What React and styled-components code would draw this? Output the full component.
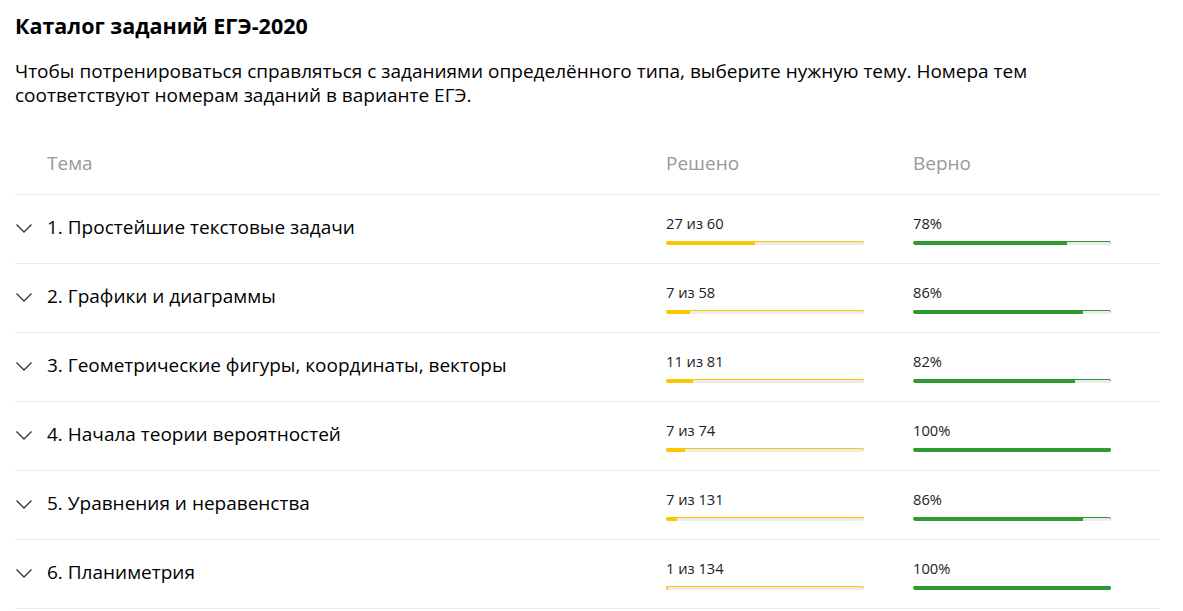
import React from 'react';
import styled, { createGlobalStyle } from 'styled-components';

const GlobalStyle = createGlobalStyle`
  body {
    margin: 0;
    background: #fff;
    font-family: 'Open Sans', 'Liberation Sans', Arial, sans-serif;
    color: #000;
  }
`;

const Page = styled.div`
  padding: 12px 23px 0 15px;
  width: 1145px;
`;

const Title = styled.h1`
  margin: 0;
  font-size: 21.5px;
  line-height: 28px;
  font-weight: 700;
`;

const Lead = styled.p`
  margin: 19px 0 0;
  max-width: 1100px;
  font-size: 19px;
  line-height: 24px;
`;

const Table = styled.div`
  margin-top: 36px;
`;

const Row = styled.div`
  display: grid;
  grid-template-columns: 32px 1fr 247px 247px;
  align-items: center;
  height: ${(p) => (p.head ? '51px' : '68px')};
  border-bottom: 1px solid #ebebeb;
`;

const HeadCell = styled.div`
  grid-column: ${(p) => p.col};
  color: #999;
  font-size: 19px;
  line-height: 24px;
  padding-bottom: 12px;
`;

const Chevron = styled.svg`
  display: block;
  width: 16px;
  height: 9px;
  margin: 0 0 1px 1px;
`;

const TopicName = styled.div`
  font-size: 19px;
  line-height: 24px;
  color: #000;
  padding-bottom: 5px;
`;

const Stat = styled.div`
  display: flex;
  flex-direction: column;
  padding-top: 1px;
`;

const StatText = styled.span`
  font-size: 14.7px;
  line-height: 19px;
  color: #222;
`;

const Track = styled.div`
  margin-top: 8px;
  width: 80%;
  height: 4px;
  border-radius: 2px;
  background: #ececec;
  box-shadow: inset 0 1px 0 ${(p) => p.color};
  overflow: hidden;
`;

const Fill = styled.div`
  height: 100%;
  background: ${(p) => p.color};
  border-radius: 2px 0 0 2px;
`;

const YELLOW = '#fcc700';
const GREEN = '#2e9b30';

const topics = [
  { name: '1. Простейшие текстовые задачи', done: 27, total: 60, right: 78 },
  { name: '2. Графики и диаграммы', done: 7, total: 58, right: 86 },
  { name: '3. Геометрические фигуры, координаты, векторы', done: 11, total: 81, right: 82 },
  { name: '4. Начала теории вероятностей', done: 7, total: 74, right: 100 },
  { name: '5. Уравнения и неравенства', done: 7, total: 131, right: 86 },
  { name: '6. Планиметрия', done: 1, total: 134, right: 100 },
];

const Bar = ({ color, value }) => (
  <Track color={color}>
    <Fill color={color} style={{ width: `${Math.max(value, 1)}%` }} />
  </Track>
);

const App = () => (
  <Page>
    <GlobalStyle />
    <Title>Каталог заданий ЕГЭ-2020</Title>
    <Lead>
      Чтобы потренироваться справляться с заданиями определённого типа, выберите нужную тему. Номера тем
      соответствуют номерам заданий в варианте ЕГЭ.
    </Lead>
    <Table>
      <Row head>
        <HeadCell col="2">Тема</HeadCell>
        <HeadCell col="3">Решено</HeadCell>
        <HeadCell col="4">Верно</HeadCell>
      </Row>
      {topics.map((t) => (
        <Row key={t.name}>
          <Chevron viewBox="0 0 16 9">
            <path d="M0.5 0.5 L8 8 L15.5 0.5" fill="none" stroke="#333" strokeWidth="1.3" />
          </Chevron>
          <TopicName>{t.name}</TopicName>
          <Stat>
            <StatText>{`${t.done} из ${t.total}`}</StatText>
            <Bar color={YELLOW} value={(t.done / t.total) * 100} />
          </Stat>
          <Stat>
            <StatText>{`${t.right}%`}</StatText>
            <Bar color={GREEN} value={t.right} />
          </Stat>
        </Row>
      ))}
    </Table>
  </Page>
);

export default App;
